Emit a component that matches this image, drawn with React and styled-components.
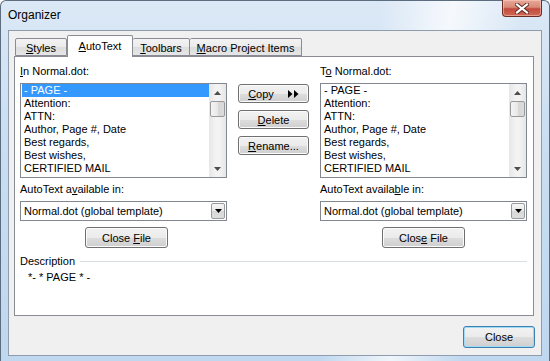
import React from "react";
import styled, { createGlobalStyle } from "styled-components";

const GlobalStyle = createGlobalStyle`
  html, body {
    margin: 0;
    padding: 0;
    background: #ffffff;
  }
  body {
    font-family: "Liberation Sans", Arial, sans-serif;
    font-size: 11px;
    color: #000;
  }
`;

const Window = styled.div`
  width: 550px;
  height: 361px;
  box-sizing: border-box;
  border: 1px solid #5c6d80;
  border-bottom: none;
  border-radius: 6px 6px 0 0;
  padding: 0 7px 5px;
  display: flex;
  flex-direction: column;
  background:
    linear-gradient(100deg, rgba(255,255,255,0) 62%, rgba(255,255,255,0.75) 74%, rgba(255,255,255,0) 86%),
    linear-gradient(to bottom, #dbe8f6 0%, #c9def2 40%, #bfd7ef 100%);
`;

const TitleBar = styled.div`
  height: 29px;
  display: flex;
  justify-content: space-between;
  align-items: flex-start;
`;

const Title = styled.div`
  font-size: 12px;
  line-height: 14px;
  padding-top: 7px;
  color: #000;
`;

const CloseBox = styled.div`
  width: 40px;
  height: 17px;
  margin-top: -1px;
  box-sizing: border-box;
  border: 1px solid #6b2c25;
  border-top: none;
  border-radius: 0 0 4px 4px;
  display: flex;
  align-items: center;
  justify-content: center;
  background: linear-gradient(to bottom, #e8a899 0%, #d88a78 45%, #c24a3c 55%, #cf6a55 100%);
  box-shadow: inset 0 0 0 1px rgba(255, 210, 200, 0.5);
`;

const Client = styled.div`
  flex: 1;
  box-sizing: border-box;
  border: 1px solid #8f9cab;
  background: #f0f0f0;
  padding: 4px 7px 0 5px;
  display: flex;
  flex-direction: column;
`;

const TabStrip = styled.div`
  height: 21px;
  display: flex;
  align-items: flex-end;
  padding-left: 1px;
`;

const Tab = styled.div`
  position: relative;
  box-sizing: border-box;
  width: ${(p) => p.$w}px;
  height: ${(p) => (p.$active ? 22 : 18)}px;
  margin-bottom: ${(p) => (p.$active ? -1 : 0)}px;
  z-index: ${(p) => (p.$active ? 1 : 0)};
  border: 1px solid #898c95;
  border-bottom: ${(p) => (p.$active ? "none" : "1px solid #898c95")};
  border-left: ${(p) => (p.$first || p.$active ? "1px solid #898c95" : "none")};
  border-radius: 2px 2px 0 0;
  background: ${(p) =>
    p.$active ? "#ffffff" : "linear-gradient(to bottom, #f3f3f3 0%, #ebebeb 50%, #dddddd 51%, #e6e6e6 100%)"};
  text-align: center;
  line-height: ${(p) => (p.$active ? 20 : 18)}px;
  font-size: 11px;
`;

const Panel = styled.div`
  height: 260px;
  box-sizing: border-box;
  border: 1px solid #898c95;
  background: #ffffff;
  padding: 7px 6px 0 5px;
  display: flex;
  flex-direction: column;
`;

const Columns = styled.div`
  display: flex;
  gap: 11px;
`;

const Pane = styled.div`
  width: 207px;
  display: flex;
  flex-direction: column;
`;

const Label = styled.div`
  height: 14px;
  line-height: 14px;
  margin-top: ${(p) => p.$mt || 0}px;
  white-space: nowrap;
`;

const Key = styled.span`
  text-decoration: underline;
  text-underline-offset: 1px;
`;

const ListBox = styled.div`
  margin-top: 5px;
  height: 95px;
  box-sizing: border-box;
  border: 1px solid #828790;
  background: #fff;
  display: flex;
`;

const Items = styled.div`
  flex: 1;
  padding: 0 0 0 1px;
  overflow: hidden;
`;

const Item = styled.div`
  height: 13px;
  line-height: 13px;
  padding-left: 2px;
  white-space: nowrap;
  background: ${(p) => (p.$selected ? "#3399ff" : "transparent")};
  color: ${(p) => (p.$selected ? "#fff" : "#000")};
`;

const ScrollBar = styled.div`
  width: 17px;
  display: flex;
  flex-direction: column;
  background: linear-gradient(to right, #e6e6e6, #f3f3f3 40%, #f3f3f3 60%, #e6e6e6);
`;

const ArrowCell = styled.div`
  height: 17px;
  display: flex;
  align-items: center;
  justify-content: center;
`;

const Thumb = styled.div`
  height: 16px;
  margin: 0 1px;
  box-sizing: border-box;
  border: 1px solid #9a9a9a;
  border-radius: 2px;
  background: linear-gradient(to right, #f4f4f4 0%, #e8e8e8 50%, #d6d6d6 51%, #dcdcdc 100%);
`;

const Track = styled.div`
  flex: 1;
`;

const Combo = styled.div`
  margin-top: 5px;
  height: 20px;
  box-sizing: border-box;
  border: 1px solid #828790;
  background: #fff;
  display: flex;
  align-items: center;
  padding: 0 1px 0 3px;
`;

const ComboText = styled.div`
  flex: 1;
  white-space: nowrap;
`;

const DropButton = styled.div`
  width: 14px;
  height: 16px;
  box-sizing: border-box;
  border: 1px solid #9a9a9a;
  border-radius: 2px;
  display: flex;
  align-items: center;
  justify-content: center;
  background: linear-gradient(to bottom, #f6f6f6 0%, #e9e9e9 50%, #d8d8d8 51%, #dedede 100%);
`;

const Button = styled.div`
  box-sizing: border-box;
  width: ${(p) => p.$w}px;
  height: ${(p) => p.$h || 19}px;
  border: 1px solid ${(p) => (p.$default ? "#3c7fb1" : "#707070")};
  border-radius: 3px;
  display: flex;
  align-items: center;
  justify-content: center;
  gap: ${(p) => p.$gap || 0}px;
  background: linear-gradient(to bottom, #f2f2f2 0%, #ebebeb 50%, #dddddd 51%, #cfcfcf 100%);
  box-shadow: inset 0 0 0 1px ${(p) => (p.$default ? "#9fdbf5" : "#fbfbfb")};
  white-space: nowrap;
`;

const CenterRow = styled.div`
  margin-top: 6px;
  display: flex;
  justify-content: center;
  padding-left: ${(p) => p.$shift || 0}px;
`;

const Middle = styled.div`
  width: 71px;
  padding-top: 20px;
  display: flex;
  flex-direction: column;
  gap: 7px;
`;

const DescHead = styled.div`
  margin-top: 6px;
  width: 507px;
  display: flex;
  align-items: center;
  gap: 5px;
  height: 14px;
  line-height: 14px;
`;

const DescLine = styled.div`
  flex: 1;
  height: 1px;
  background: #d5dfe5;
`;

const DescText = styled.div`
  margin-top: 2px;
  padding-left: 8px;
  height: 14px;
  line-height: 14px;
`;

const Footer = styled.div`
  display: flex;
  justify-content: flex-end;
  padding-top: 10px;
  margin-right: -1px;
`;

const ArrowUp = () => (
  <svg width="7" height="4" viewBox="0 0 7 4">
    <path d="M0 4 L3.5 0 L7 4 Z" fill="#4d4d4d" />
  </svg>
);

const ArrowDown = ({ color = "#4d4d4d" }) => (
  <svg width="7" height="4" viewBox="0 0 7 4">
    <path d="M0 0 L7 0 L3.5 4 Z" fill={color} />
  </svg>
);

const DoubleArrow = () => (
  <svg width="11" height="8" viewBox="0 0 11 8">
    <path d="M0 0 L4.5 4 L0 8 Z M6 0 L10.5 4 L6 8 Z" fill="#000" />
  </svg>
);

const CloseGlyph = () => (
  <svg width="14" height="11" viewBox="0 0 14 11">
    <path d="M2 1.5 L12 9.5 M12 1.5 L2 9.5" stroke="#5a2a24" strokeWidth="4" strokeLinecap="square" />
    <path d="M2 1.5 L12 9.5 M12 1.5 L2 9.5" stroke="#ffffff" strokeWidth="2.2" strokeLinecap="square" />
  </svg>
);

const ENTRIES = [
  "- PAGE -",
  "Attention:",
  "ATTN:",
  "Author, Page #, Date",
  "Best regards,",
  "Best wishes,",
  "CERTIFIED MAIL",
];

const EntryList = ({ selected }) => (
  <ListBox>
    <Items>
      {ENTRIES.map((e, i) => (
        <Item key={e} $selected={selected && i === 0}>
          {e}
        </Item>
      ))}
    </Items>
    <ScrollBar>
      <ArrowCell>
        <ArrowUp />
      </ArrowCell>
      <Thumb />
      <Track />
      <ArrowCell>
        <ArrowDown />
      </ArrowCell>
    </ScrollBar>
  </ListBox>
);

const Side = ({ label, avail, closeFile, selected, shift }) => (
  <Pane>
    <Label>{label}</Label>
    <EntryList selected={selected} />
    <Label $mt={4}>{avail}</Label>
    <Combo>
      <ComboText>Normal.dot (global template)</ComboText>
      <DropButton>
        <ArrowDown color="#000" />
      </DropButton>
    </Combo>
    <CenterRow $shift={shift}>
      <Button $w={83} $h={21}>
        <span>{closeFile}</span>
      </Button>
    </CenterRow>
  </Pane>
);

const App = () => {
  return (
    <>
      <GlobalStyle />
      <Window>
        <TitleBar>
          <Title>Organizer</Title>
          <CloseBox>
            <CloseGlyph />
          </CloseBox>
        </TitleBar>
        <Client>
          <TabStrip>
            <Tab $w={52} $first>
              <Key>S</Key>tyles
            </Tab>
            <Tab $w={66} $active>
              <Key>A</Key>utoText
            </Tab>
            <Tab $w={57}>
              <Key>T</Key>oolbars
            </Tab>
            <Tab $w={112}>
              <Key>M</Key>acro Project Items
            </Tab>
          </TabStrip>
          <Panel>
            <Columns>
              <Side
                selected
                shift={6}
                label={
                  <>
                    <Key>I</Key>n Normal.dot:
                  </>
                }
                avail={
                  <>
                    AutoText a<Key>v</Key>ailable in:
                  </>
                }
                closeFile={
                  <>
                    Close <Key>F</Key>ile
                  </>
                }
              />
              <Middle>
                <Button $w={71} $gap={14}>
                  <span>
                    <Key>C</Key>opy
                  </span>
                  <DoubleArrow />
                </Button>
                <Button $w={71}>
                  <span>
                    <Key>D</Key>elete
                  </span>
                </Button>
                <Button $w={71}>
                  <span>
                    <Key>R</Key>ename...
                  </span>
                </Button>
              </Middle>
              <Side
                label={
                  <>
                    T<Key>o</Key> Normal.dot:
                  </>
                }
                avail={
                  <>
                    AutoText availa<Key>b</Key>le in:
                  </>
                }
                closeFile={
                  <>
                    Clos<Key>e</Key> File
                  </>
                }
              />
            </Columns>
            <DescHead>
              <span>Description</span>
              <DescLine />
            </DescHead>
            <DescText>*- * PAGE * -</DescText>
          </Panel>
          <Footer>
            <Button $w={72} $h={22} $default>
              Close
            </Button>
          </Footer>
        </Client>
      </Window>
    </>
  );
};

export default App;
